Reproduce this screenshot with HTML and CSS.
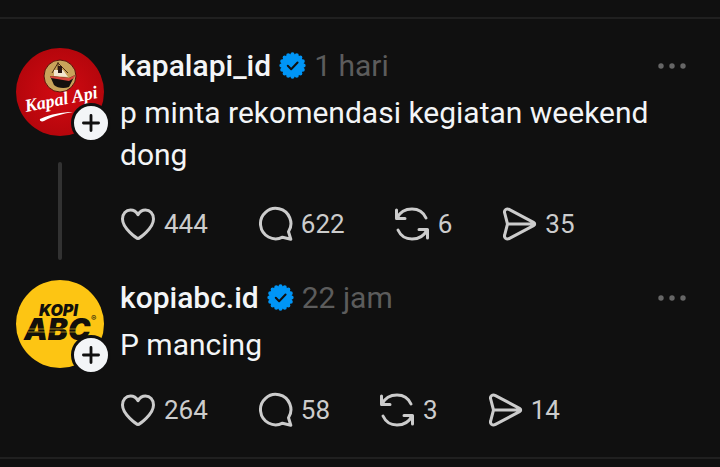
FILE: index.html
```html
<!DOCTYPE html>
<html lang="id">
<head>
    <meta charset="UTF-8">
    <meta name="viewport" content="width=device-width, initial-scale=1.0">
    <title>Threads</title>
    <link rel="stylesheet" href="styles.css">
</head>
<body>

    <!-- Shared icons -->
    <svg class="sprite" aria-hidden="true">
        <symbol id="verified" viewBox="0 0 40 40">
            <circle cx="20" cy="20" r="17" fill="#0095f6"/>
            <circle cx="20" cy="20" r="16.500" fill="none" stroke="#0095f6" stroke-width="6" stroke-linecap="round" pathLength="16" stroke-dasharray="0 1"/>
            <path fill="none" stroke="#101010" stroke-width="3" stroke-linecap="round" stroke-linejoin="round" d="M13 20.500l5 5 9.500-10"/>
        </symbol>
        <symbol id="heart" viewBox="0 0 36 36">
            <path d="M18 32.500C17 32.500 2.500 22.500 2.500 13 2.500 7.500 6 4 10.500 4c3.500 0 5.800 1.700 7.500 4.700C19.700 5.700 22 4 25.500 4 30 4 33.500 7.500 33.500 13c0 9.500-14.500 19.500-15.500 19.500z"/>
        </symbol>
        <symbol id="comment" viewBox="0 0 36 36">
            <path d="M31.500 25.800A15.200 15.200 0 1 0 25.500 31.200L33.800 33.300z"/>
        </symbol>
        <symbol id="repost" viewBox="0 0 36 36">
            <path d="M2.500 4v8.500H11M3 12C6 6 11 3 18 3c6.500 0 11.500 3.500 14 9M33.500 32v-8.500H25M33 24c-3 6-8 9-15 9-6.500 0-11.500-3.500-14-9"/>
        </symbol>
        <symbol id="share" viewBox="0 0 36 36">
            <path d="M8.500 3.600L32.500 16.300c1.600.9 1.600 2.500 0 3.400L8.500 32.400c-3 1.600-5.800-.6-4.800-3.600L6.500 18 3.700 7.200C2.700 4.200 5.500 2 8.500 3.600zM6.500 18h26"/>
        </symbol>
        <symbol id="dots" viewBox="0 0 28 6">
            <circle cx="3" cy="3" r="2.700"/>
            <circle cx="14" cy="3" r="2.700"/>
            <circle cx="25" cy="3" r="2.700"/>
        </symbol>
        <symbol id="plus" viewBox="0 0 36 36">
            <path d="M18 10v16M10 18h16"/>
        </symbol>
    </svg>

    <main class="thread">

        <article class="post parent">
            <div class="side">
                <div class="avatar">
                    <svg class="logo" viewBox="0 0 88 88" role="img" aria-label="Kapal Api">
                        <defs>
                            <radialGradient id="red">
                                <stop offset="0" stop-color="#d30a12"/>
                                <stop offset="1" stop-color="#b5060c"/>
                            </radialGradient>
                        </defs>
                        <circle cx="44" cy="44" r="44" fill="url(#red)"/>
                        <circle cx="44" cy="28" r="16" fill="#c9a35a" stroke="#5c120b"/>
                        <path d="M42 14v12M36 25l6-10 10 10" fill="none" stroke="#4a2c14" stroke-width="1"/>
                        <path d="M38 22h9l5 7-14-1z" fill="#f3e6cf"/>
                        <path d="M42 18h4v7h-4z" fill="#2a1712"/>
                        <path d="M34 28l19 2 6-3-6 12c-5 2-12 1-15-2z" fill="#15100e"/>
                        <path d="M34 28l19 2 6-3-1 3-5 3-18-3z" fill="#d9473c"/>
                        <text class="kapal" x="10" y="64" transform="rotate(-11 10 64)">Kapal Api</text>
                        <path d="M24 71c11-5 22-7 33-7-11 2-20 4-29 9-2 1-5 0-4-2z" fill="#fff"/>
                    </svg>
                    <button class="follow" type="button" aria-label="Ikuti kapalapi_id"><svg><use href="#plus"/></svg></button>
                </div>
                <div class="line"></div>
            </div>
            <div class="content">
                <header class="head">
                    <a class="name" href="#">kapalapi_id</a>
                    <svg class="verified"><use href="#verified"/></svg>
                    <time class="time">1 hari</time>
                    <button class="more" type="button" aria-label="Lainnya"><svg><use href="#dots"/></svg></button>
                </header>
                <p class="text">p minta rekomendasi kegiatan weekend dong</p>
                <div class="actions">
                    <button class="action" type="button"><svg><use href="#heart"/></svg>444</button>
                    <button class="action" type="button"><svg><use href="#comment"/></svg>622</button>
                    <button class="action" type="button"><svg><use href="#repost"/></svg>6</button>
                    <button class="action" type="button"><svg><use href="#share"/></svg>35</button>
                </div>
            </div>
        </article>

        <article class="post">
            <div class="side">
                <div class="avatar">
                    <svg class="logo" viewBox="0 0 88 88" role="img" aria-label="Kopi ABC">
                        <circle cx="44" cy="44" r="44" fill="#fdc513"/>
                        <text class="kopi" x="23" y="36">KOPI</text>
                        <text class="abc" x="8" y="60">ABC</text>
                        <path d="M12 49h56M12 52h56" stroke="#fdc513" stroke-width="1" opacity=".6"/>
                        <text class="reg" x="75" y="41">®</text>
                    </svg>
                    <button class="follow" type="button" aria-label="Ikuti kopiabc.id"><svg><use href="#plus"/></svg></button>
                </div>
            </div>
            <div class="content">
                <header class="head">
                    <a class="name" href="#">kopiabc.id</a>
                    <svg class="verified"><use href="#verified"/></svg>
                    <time class="time">22 jam</time>
                    <button class="more" type="button" aria-label="Lainnya"><svg><use href="#dots"/></svg></button>
                </header>
                <p class="text">P mancing</p>
                <div class="actions">
                    <button class="action" type="button"><svg><use href="#heart"/></svg>264</button>
                    <button class="action" type="button"><svg><use href="#comment"/></svg>58</button>
                    <button class="action" type="button"><svg><use href="#repost"/></svg>3</button>
                    <button class="action" type="button"><svg><use href="#share"/></svg>14</button>
                </div>
            </div>
        </article>

    </main>

</body>
</html>
```
FILE: styles.css
```css
body {
    margin: 0;
    padding-top: 17px;
    background-color: #101010;
    color: #f3f5f7;
    font-family: Roboto, "Liberation Sans", sans-serif;
    font-size: 30px;
}
button {
    padding: 0;
    border: none;
    background: none;
    color: inherit;
    font: inherit;
    cursor: pointer;
}
.sprite {
    display: none;
}
.thread {
    padding: 29px 34px 29px 16px;
    border-top: 2px solid #202020;
    border-bottom: 2px solid #202020;
}
.post {
    display: flex;
    gap: 16px;
}

/* Avatar column */
.side {
    display: flex;
    flex-direction: column;
    align-items: center;
    flex: none;
}
.avatar {
    position: relative;
    width: 88px;
    height: 88px;
}
.logo {
    display: block;
    width: 100%;
    height: 100%;
}
.follow {
    position: absolute;
    right: -7px;
    bottom: -7px;
    width: 40px;
    height: 40px;
    box-sizing: border-box;
    border: 3px solid #101010;
    border-radius: 50%;
    background-color: #f3f5f7;
}
.follow svg {
    display: block;
    width: 34px;
    height: 34px;
    fill: none;
    stroke: #101010;
    stroke-width: 3;
    stroke-linecap: round;
}
.line {
    flex: 1;
    width: 4px;
    margin: 26px 0 20px;
    border-radius: 2px;
    background-color: #323232;
}

/* Logos */
.kapal {
    fill: #fff;
    font: italic bold 18px "Liberation Serif", serif;
}
.kopi,
.abc {
    fill: #12100b;
    font: italic 900 16px Inter, "Open Sans", sans-serif;
}
.abc {
    font-size: 30px;
}
.reg {
    fill: #12100b;
    font: 8px Inter, sans-serif;
}

/* Post body */
.content {
    flex: 1;
    min-width: 0;
}
.parent .content {
    padding-bottom: 38px;
}
.head {
    display: flex;
    align-items: center;
    gap: 8px;
    height: 35px;
}
.name {
    color: inherit;
    font-weight: 500;
    text-decoration: none;
}
.verified {
    width: 27px;
    height: 27px;
}
.time {
    color: #5c5c5c;
}
.more {
    margin-left: auto;
}
.more svg {
    display: block;
    width: 28px;
    height: 6px;
    fill: #666;
}
.text {
    margin: 9px 0 0;
    line-height: 42px;
}
.actions {
    display: flex;
    gap: 49px;
    margin-top: 26px;
}
.parent .actions {
    margin-top: 30px;
}
.action {
    display: flex;
    align-items: center;
    gap: 8px;
    height: 36px;
    color: #ccc;
    font-size: 26px;
}
.action svg {
    width: 36px;
    height: 36px;
    fill: none;
    stroke: #ccc;
    stroke-width: 3;
    stroke-linecap: round;
    stroke-linejoin: round;
}
```
